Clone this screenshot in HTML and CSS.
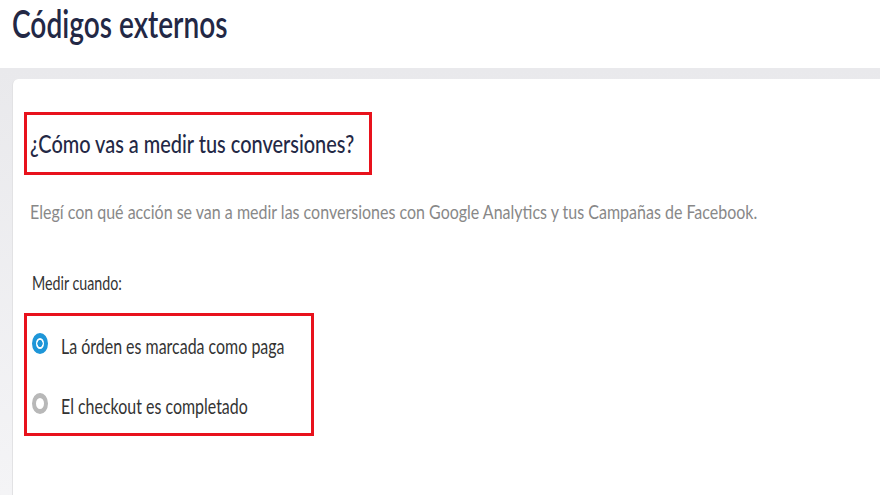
FILE: index.html
```html
<!DOCTYPE html>
<html lang="es">
<head>
  <meta charset="UTF-8">
  <title>Códigos externos</title>
  <link rel="stylesheet" href="styles.css">
</head>
<body>
  <header class="page-header">
    <h1><span class="narrow">Códigos externos</span></h1>
  </header>

  <main class="page-body">
    <section class="card">
      <div class="highlight title-box">
        <h2><span class="narrow">¿Cómo vas a medir tus conversiones?</span></h2>
      </div>

      <p class="help"><span class="narrow">Elegí con qué acción se van a medir las conversiones con Google Analytics y tus Campañas de Facebook.</span></p>

      <p class="field-label"><span class="narrow">Medir cuando:</span></p>

      <div class="highlight options">
        <label class="radio">
          <input type="radio" name="medir" value="paga" checked>
          <span class="dot"></span>
          <span class="narrow">La órden es marcada como paga</span>
        </label>
        <label class="radio">
          <input type="radio" name="medir" value="checkout">
          <span class="dot"></span>
          <span class="narrow">El checkout es completado</span>
        </label>
      </div>
    </section>
  </main>
</body>
</html>
```

FILE: styles.css
```css
body {
  margin: 0;
  background: #fff;
  font-family: Lato, 'Open Sans', sans-serif;
  color: #333;
  overflow: hidden;
}

/* the capture is squeezed sideways, so the text is too */
.narrow {
  display: inline-block;
  white-space: nowrap;
  transform: scaleX(0.75);
  transform-origin: left center;
}

.page-header {
  height: 68px;
  padding-left: 12px;
}

h1 {
  margin: 0;
  padding-top: 1px;
  font-size: 39px;
  font-weight: 600;
  color: #232845;
  line-height: 44px;
}

h1 .narrow {
  transform: scaleX(0.72);
}

.page-body {
  background: linear-gradient(#e9e9ec, #f4f4f6);
  padding: 11px 0 0 12px;
}

.card {
  background: #fff;
  border-left: 1px solid #e2e2e4;
  border-top-left-radius: 6px;
  height: 383px;
  padding: 33px 0 0 11px;
  overflow: hidden;
}

.highlight {
  border: 3px solid #e8121c;
}

.title-box {
  width: 339px;
  height: 57px;
  display: flex;
  align-items: center;
  padding-left: 3px;
}

h2 {
  margin: 0;
  font-size: 24px;
  font-weight: 500;
  line-height: 30px;
  color: #232845;
}

h2 .narrow {
  transform: scaleX(0.83);
}

.help {
  margin: 24px 0 0 6px;
  font-size: 20px;
  line-height: 24px;
  color: #888;
}

.help .narrow {
  transform: scaleX(0.8);
}

.field-label {
  margin: 48px 0 0 8px;
  font-size: 19px;
  line-height: 24px;
  color: #333;
}

.options {
  width: 279px;
  height: 86px;
  margin-top: 18px;
  padding: 16px 0 15px 5px;
  display: flex;
  flex-direction: column;
  gap: 34px;
}

.radio {
  display: flex;
  align-items: center;
  gap: 13px;
  height: 26px;
  font-size: 21px;
  color: #333;
  cursor: pointer;
}

.radio .narrow {
  transform: scaleX(0.76);
}

.radio input {
  display: none;
}

.dot {
  flex: none;
  width: 8px;
  height: 11px;
  margin-bottom: 4px;
  border-style: solid;
  border-width: 5px 4px;
  border-color: #b8b8b8;
  border-radius: 50%;
  background: #fff;
}

.radio input:checked + .dot {
  border-color: #1e96d8;
  background: radial-gradient(closest-side, #1e96d8 0 60%, #fff 70%);
}
```
